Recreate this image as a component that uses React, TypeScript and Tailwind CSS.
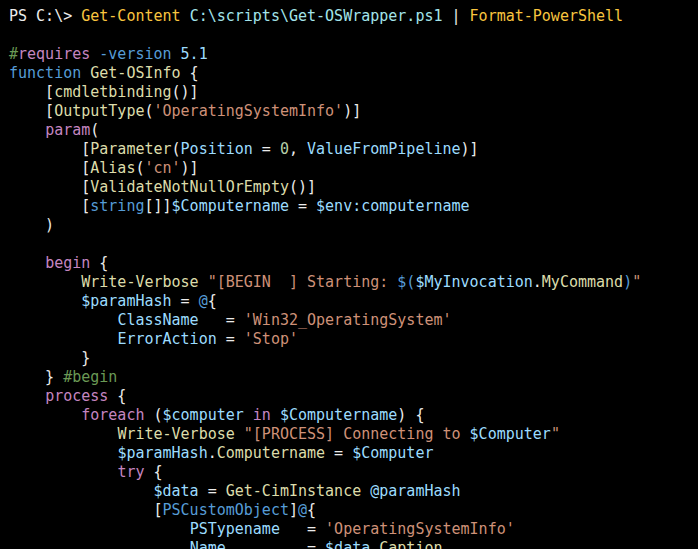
import React from 'react';

// token colours (VS Code dark-ish palette used by Format-PowerShell)
const W = 'text-[#ececec]';
const YEL = 'text-[#f9c53f]';
const CYAN = 'text-[#a3e4ea]';
const GRN = 'text-[#6a9955]';
const PINK = 'text-[#c586c0]';
const BLUE = 'text-[#569cd6]';
const LBLUE = 'text-[#9cdcfe]';
const BEIGE = 'text-[#dcdcaa]';
const STR = 'text-[#ce9178]';
const NUM = 'text-[#b5cea8]';

type Tok = [string, string];

const lines: Tok[][] = [
  [[W, 'PS C:\\> '], [YEL, 'Get-Content'], [W, ' '], [CYAN, 'C:\\scripts\\Get-OSWrapper.ps1'], [W, ' | '], [YEL, 'Format-PowerShell']],
  [],
  [[GRN, '#'], [PINK, 'requires'], [W, ' '], [BLUE, '-version'], [W, ' '], [LBLUE, '5.1']],
  [[BLUE, 'function'], [W, ' '], [BEIGE, 'Get-OSInfo'], [W, ' {']],
  [[W, '    ['], [BEIGE, 'cmdletbinding'], [W, '()]']],
  [[W, '    ['], [BEIGE, 'OutputType'], [W, '('], [STR, "'OperatingSystemInfo'"], [W, ')]']],
  [[W, '    '], [PINK, 'param'], [W, '(']],
  [[W, '        ['], [BEIGE, 'Parameter'], [W, '('], [LBLUE, 'Position'], [W, ' = '], [NUM, '0'], [W, ', '], [LBLUE, 'ValueFromPipeline'], [W, ')]']],
  [[W, '        ['], [BEIGE, 'Alias'], [W, '('], [STR, "'cn'"], [W, ')]']],
  [[W, '        ['], [BEIGE, 'ValidateNotNullOrEmpty'], [W, '()]']],
  [[W, '        ['], [BLUE, 'string'], [W, '[]]'], [LBLUE, '$Computername'], [W, ' = '], [LBLUE, '$env:computername']],
  [[W, '    )']],
  [],
  [[W, '    '], [PINK, 'begin'], [W, ' {']],
  [[W, '        '], [BEIGE, 'Write-Verbose'], [W, ' '], [STR, '"[BEGIN  ] Starting: '], [BLUE, '$('], [LBLUE, '$MyInvocation'], [W, '.'], [BEIGE, 'MyCommand'], [BLUE, ')'], [STR, '"']],
  [[W, '        '], [LBLUE, '$paramHash'], [W, ' = '], [BLUE, '@'], [W, '{']],
  [[W, '            '], [LBLUE, 'ClassName'], [W, '   = '], [STR, "'Win32_OperatingSystem'"]],
  [[W, '            '], [LBLUE, 'ErrorAction'], [W, ' = '], [STR, "'Stop'"]],
  [[W, '        }']],
  [[W, '    } '], [GRN, '#begin']],
  [[W, '    '], [PINK, 'process'], [W, ' {']],
  [[W, '        '], [PINK, 'foreach'], [W, ' ('], [LBLUE, '$computer'], [W, ' '], [PINK, 'in'], [W, ' '], [LBLUE, '$Computername'], [W, ') {']],
  [[W, '            '], [BEIGE, 'Write-Verbose'], [W, ' '], [STR, '"[PROCESS] Connecting to '], [LBLUE, '$Computer'], [STR, '"']],
  [[W, '            '], [LBLUE, '$paramHash'], [W, '.'], [BEIGE, 'Computername'], [W, ' = '], [LBLUE, '$Computer']],
  [[W, '            '], [PINK, 'try'], [W, ' {']],
  [[W, '                '], [LBLUE, '$data'], [W, ' = '], [BEIGE, 'Get-CimInstance'], [W, ' '], [LBLUE, '@paramHash']],
  [[W, '                ['], [BLUE, 'PSCustomObject'], [W, ']'], [BLUE, '@'], [W, '{']],
  [[W, '                    '], [LBLUE, 'PSTypename'], [W, '   = '], [STR, "'OperatingSystemInfo'"]],
  [[W, '                    '], [LBLUE, 'Name'], [W, '         = '], [LBLUE, '$data'], [W, '.'], [BEIGE, 'Caption']],
];

const App = () => {
  return (
    <div className="w-[698px] h-[549px] overflow-hidden bg-black pl-[9px] pt-[7px] font-['DejaVu_Sans_Mono',monospace] text-[15px] leading-[19px]">
      {lines.map((line, i) => (
        <div key={i} className="h-[19px] whitespace-pre">
          {line.map(([cls, text], j) => (
            <span key={j} className={cls}>
              {text}
            </span>
          ))}
        </div>
      ))}
    </div>
  );
};

export default App;
